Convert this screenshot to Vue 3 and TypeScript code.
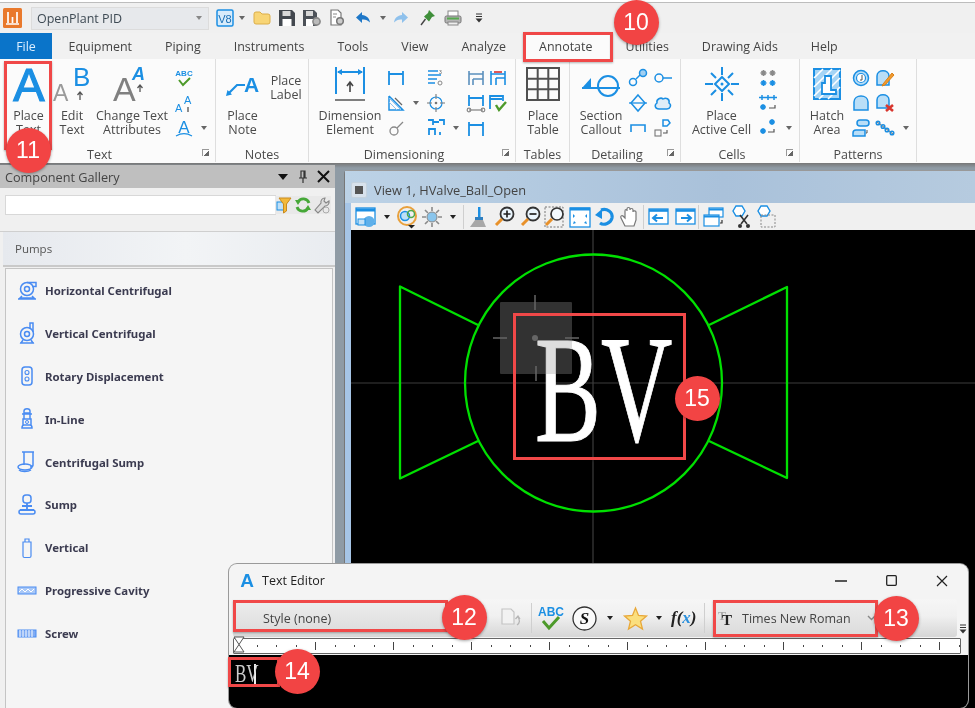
<script setup lang="ts">
import { h } from 'vue'
import type { FunctionalComponent } from 'vue'

const B = '#1b8fe3'
const P = '#4a8cf2'
const none = 'stroke="none"'

// pixel sized icon table: [width, height, svg markup]
const icons: Record<string, [number, number, string]> = {
  logo: [19, 20, `<rect width="19" height="20" rx="1.5" fill="#e9792c" ${none}/><path d="M5 4v11M9.5 9v6M14 4v11M3 16h13" stroke="#fff" stroke-width="1.7"/>`],
  v8: [18, 18, `<rect x="1" y="1" width="16" height="16" rx="1.5" fill="#d8ecfb" stroke="${B}"/><text x="9" y="14" text-anchor="middle" font-size="11" font-family="Liberation Sans" fill="#1a6fb5" ${none}>V8</text>`],
  folder: [18, 14, `<path d="M1 3q0-2 2-2h4l2 2h6q2 0 2 2v6q0 2-2 2H3q-2 0-2-2z" fill="#f8d576" stroke="#dcae48" stroke-width="1"/>`],
  save: [16, 16, `<path d="M0 0h13l3 3v13H0z" fill="#43484f" ${none}/><rect x="3.5" y="1" width="8" height="5" fill="#d8d8d8" ${none}/><rect x="3.5" y="9" width="9" height="7" fill="#fff" ${none}/>`],
  saveall: [18, 16, `<path d="M0 0h11l3 3v13H0z" fill="#4c5158" ${none}/><rect x="3" y="1" width="7" height="5" fill="#d8d8d8" ${none}/><rect x="3" y="9" width="7" height="7" fill="#fff" ${none}/><circle cx="13.5" cy="11.5" r="3.6" fill="#bbb" stroke="#888" stroke-width="1.6"/>`],
  docgear: [16, 18, `<path d="M2 1h7l3 3v12H2z" fill="#fff" stroke="#777" stroke-width="1.2"/><circle cx="11" cy="12" r="3.3" fill="#ccc" stroke="#777" stroke-width="1.5"/><path d="M4 5h4M4 8h3" stroke="#888" stroke-width="1"/>`],
  undo: [16, 14, `<path d="M7 1 1 6.500 7 12V8.500c3-.4 5.500.3 8 3-.5-4.500-3.500-7-8-7.500z" fill="#1f78c8" ${none}/>`],
  redo: [15, 14, `<path d="M8 1l6 5.500L8 12V8.500c-3-.4-5.500.3-8 3 .5-4.500 3.500-7 8-7.500z" fill="#8fc1ec" ${none}/>`],
  pin: [16, 18, `<path d="M9 1l6 6-3 1-3 4.500-5-5L8 4z" fill="#3f8f3a" ${none}/><path d="M5.500 10 1 16" stroke="#444" stroke-width="1.4"/>`],
  print: [18, 16, `<rect x="4" y="1" width="10" height="6" fill="#fff" stroke="#888" stroke-width="1"/><rect x="1" y="6" width="16" height="7" rx="1.500" fill="#b5b5b5" stroke="#777" stroke-width="1"/><rect x="3" y="7.500" width="12" height="2" fill="#56a84f" ${none}/><rect x="4" y="12" width="10" height="3" fill="#eee" stroke="#888" stroke-width="1"/>`],
  more: [8, 10, `<path d="M1 1h6M1 3.500h6" stroke="#333" stroke-width="1.2"/><path d="M0.500 5.500h7L4 9.500z" fill="#333" ${none}/>`],

  bigA: [36, 40, `<text x="18" y="37" text-anchor="middle" font-size="47" font-family="Liberation Sans" fill="${B}" stroke-width="1.200">A</text>`],
  edit: [38, 36, `<text x="0" y="35" font-size="23" font-family="Liberation Sans" fill="#9a9a9a" ${none}>A</text><text x="20" y="20" font-size="26" font-family="Liberation Sans" fill="${B}" ${none}>B</text><path d="M27 34v-7M24.500 29l2.500-3 2.500 3" stroke="#555" stroke-width="1.300"/>`],
  attrs: [38, 36, `<text x="0" y="35" font-size="34" font-family="Liberation Sans" fill="#808080" ${none}>A</text><text x="19" y="14" font-size="18" font-style="italic" font-family="Liberation Sans" font-weight="700" fill="${B}" ${none}>A</text><path d="M27 26v-6M24.500 22l2.500-3 2.500 3" stroke="#555" stroke-width="1.300"/>`],
  abc: [18, 18, `<text x="9" y="7" text-anchor="middle" font-size="8" font-weight="700" font-family="Liberation Sans" fill="${B}" ${none}>ABC</text><path d="M4 11l4 5 7-7" stroke="#4d9a2a" stroke-width="2"/>`],
  aa: [18, 20, `<text x="0" y="19" font-size="11" font-family="Liberation Sans" fill="${B}" ${none}>A</text><text x="9" y="11" font-size="11" font-family="Liberation Sans" fill="${B}" ${none}>A</text><path d="M13 19v-5" stroke="#444" stroke-width="1.200"/>`],
  arcA: [18, 18, `<text x="9" y="14" text-anchor="middle" font-size="17" font-family="Liberation Sans" fill="${B}" ${none}>A</text><path d="M1 17c5-3 11-3 16 0" stroke-width="1.200"/>`],
  note: [36, 26, `<text x="19" y="21" font-size="21" font-weight="700" font-family="Liberation Sans" fill="${B}" ${none}>A</text><path d="M3 23l9-9h8" stroke-width="2.200"/><path d="M1 25l6-1.500-4.500-4.500z" fill="${B}" ${none}/>`],
  dim: [32, 36, `<path d="M2 1v27M30 1v27M4 6h24" stroke-width="2"/><path d="M3 6l5-3v6zM29 6l-5-3v6z" fill="${B}" ${none}/><path d="M1 34h30" stroke="#555" stroke-width="1.500"/><path d="M16 26v-9M13 20l3-4 3 4" stroke="#444" stroke-width="1.600"/>`],
  d1: [18, 16, `<path d="M2 1v14M16 1v14M2 4h14" stroke-width="1.800"/>`],
  d2: [18, 18, `<path d="M2 2v14h14L2 2" stroke-width="1.500"/><path d="M2 8l8 8M2 4l12 12" stroke="#8fc3ee" stroke-width="1"/><path d="M8 4 15 11" stroke="#666" stroke-width="1.200"/>`],
  d3: [16, 16, `<circle cx="6" cy="11" r="4" stroke="#888" stroke-width="1.300"/><path d="M9 8l6-6" stroke="#888" stroke-width="1.300"/>`],
  d4: [18, 18, `<path d="M1 2h10M1 6h13M1 10h9M1 14h7" stroke-width="1.500"/><text x="12" y="5" font-size="5" fill="#555" font-family="Liberation Sans" ${none}>3</text><circle cx="13" cy="14" r="2" stroke="#888" stroke-width="1"/>`],
  d5: [18, 18, `<circle cx="9" cy="9" r="6" stroke="${B}" stroke-width="1.200"/><circle cx="9" cy="9" r="1.300" fill="#777" ${none}/><path d="M9 0v5M9 13v5M0 9h5M13 9h5" stroke="#777" stroke-width="1.100"/>`],
  d6: [20, 18, `<path d="M2 1h5v5M13 1h5v5M7 3h6M3 16v-6h6v6M14 16v-3" stroke-width="1.800"/>`],
  d7: [18, 18, `<path d="M2 2v14M16 2v14M2 5h14M6 10h10M6 10v6" stroke="#5b90bd" stroke-width="1.600"/>`],
  d8: [18, 16, `<path d="M2 2v14M16 2v14M2 5h14" stroke-width="1.800"/>`],
  d9: [18, 18, `<path d="M2 2v14M16 2v14M2 5h14M7 9h9M7 9v7" stroke-width="1.600"/><path d="M5 3h8" stroke="#d44" stroke-width="1.800"/>`],
  d10: [20, 18, `<path d="M3 1v11M17 1v11M3 4h14" stroke-width="1.800"/><path d="M3 16h14" stroke="#888" stroke-width="1.300"/><circle cx="3" cy="16" r="1.800" stroke="#888" stroke-width="1.200"/><circle cx="17" cy="16" r="1.800" stroke="#888" stroke-width="1.200"/>`],
  d11: [20, 18, `<path d="M2 15V2h13v5M2 5h12" stroke-width="1.800"/><path d="M8 11l3 5 7-8" stroke="#4d9a2a" stroke-width="2.400"/>`],
  table: [36, 36, `<path d="M2 2h32v32H2zM2 12.700h32M2 23.300h32M12.700 2v32M23.300 2v32" stroke="#505050" stroke-width="2"/>`],
  section: [38, 26, `<path d="M0 17 9 7v10z" fill="${B}" ${none}/><path d="M0 17h38" stroke-width="2"/><ellipse cx="26" cy="15" rx="10" ry="10" stroke-width="2"/>`],
  s1: [20, 18, `<circle cx="5" cy="13" r="3.500"/><circle cx="15" cy="4" r="3.500" fill="${B}" fill-opacity=".4"/><path d="M8 10l4-4"/>`],
  s2: [18, 18, `<path d="M9 1l7 8-7 8-7-8z"/><path d="M0 9h18" stroke-width="1.300"/>`],
  s3: [16, 10, `<path d="M1 9V2h14v7M1 2h14" stroke-width="1.600"/>`],
  s4: [18, 12, `<circle cx="5" cy="6" r="4"/><path d="M9 6h9" />`],
  s5: [20, 18, `<path d="M6 15c-4 0-5-4-2-6-1-4 4-6 6-4 3-2 7 0 6 4 3 2 1 6-2 6z" fill="${B}" fill-opacity=".12"/>`],
  s6: [18, 18, `<path d="M9 1h5l2 3-3 3h-4z"/><rect x="1" y="11" width="6" height="6" stroke="#777" stroke-width="1.100"/><path d="M9 14h4v-3" stroke="#555" stroke-width="1.100"/>`],
  active: [34, 34, `<path d="M17 10l7 7-7 7-7-7z" stroke-width="2"/><circle cx="17" cy="17" r="1.500" fill="${B}" ${none}/><path d="M17 0v8M17 26v8M0 17h8M26 17h8M6 6l5 5M23 23l5 5M28 6l-5 5M11 23l-5 5" stroke-width="2"/>`],
  ce1: [18, 18, `<g stroke="#8a8a8a" stroke-width="1.500"><path d="M4.500 1v6M1.500 4h6M2.500 2l4 4M6.500 2l-4 4M13.500 1v6M10.500 4h6M11.500 2l4 4M15.500 2l-4 4"/></g><path d="M4.500 11v6M1.500 14h6M2.500 12l4 4M6.500 12l-4 4M13.500 11v6M10.500 14h6M11.500 12l4 4M15.500 12l-4 4" stroke-width="1.500"/>`],
  ce2: [18, 18, `<path d="M3 1v5M0 3.500h6M9 1v5M6 3.500h6M15 1v5M12 3.500h6M4 10v6M1 13h6M2 11l4 4M6 11l-4 4" stroke-width="1.500"/><path d="M10 14h6v-3" stroke="#555" stroke-width="1.200"/>`],
  ce3: [18, 18, `<path d="M13 0v6M10 3h6M11 1l4 4M15 1l-4 4M4 9v6M1 12h6M2 10l4 4M6 10l-4 4" stroke-width="1.600"/><path d="M9 13h6v-3" stroke="#555" stroke-width="1.200"/>`],
  hatch: [28, 32, `<rect x="1" y="1" width="26" height="30" fill="#a5d4f5" stroke-width="2"/><path d="M1 10 10 1M1 19 19 1M1 28 27 2M6 31 27 10M15 31 27 19" stroke="#fff" stroke-width="1.600"/><path d="M12 8h6v14h5v4H9V15h3z" fill="#fff" stroke-width="1.800"/>`],
  p1: [18, 18, `<circle cx="9" cy="9" r="7.500" fill="#b9def7"/><circle cx="9" cy="9" r="4.500" fill="#fff" stroke-width="1.200"/><path d="M10 6v5H8" stroke="#555" stroke-width="1"/>`],
  p2: [20, 18, `<path d="M2 16V7c0-7 12-7 12 0v9z" fill="#b9def7"/><path d="M8 15 17 4l2 2-9 10-3 1z" fill="#f29a2e" stroke="#d98218" stroke-width="1"/>`],
  p3: [18, 18, `<path d="M2 16V8c0-8 14-8 14 0v8z" fill="#b9def7"/>`],
  p4: [20, 18, `<path d="M2 14V6c0-7 12-7 12 0v8z" fill="#b9def7"/><path d="M11 11l7 6M18 11l-7 6" stroke="#d8362e" stroke-width="2.600"/>`],
  p5: [18, 18, `<rect x="5" y="1" width="12" height="6" rx="3" fill="#b9def7"/><path d="M1 17v-3c0-2 1-3 3-3h9v6z" fill="#b9def7"/><path d="M15 11v3h-1" stroke="#555" stroke-width="1"/>`],
  p6: [20, 16, `<path d="M2 2l16 12" stroke="#888" stroke-width="1.100"/><circle cx="3" cy="3" r="1.800"/><circle cx="8" cy="6.500" r="1.800"/><circle cx="12" cy="10" r="1.800"/><circle cx="17" cy="13" r="1.800"/>`],

  funnel: [15, 17, `<rect x="0" y="5" width="9" height="8" fill="#bfe0f8" stroke="${B}" stroke-width="1"/><path d="M2 1h12L9.500 7v7l-3 2V7z" fill="#f3b93a" stroke="#c98a1c" stroke-width="1"/>`],
  refresh: [16, 16, `<path d="M14 6A6 6 0 0 0 3 5M2 10a6 6 0 0 0 11 1" stroke="#46a838" stroke-width="2.800"/><path d="M0 3h6L3 8zM16 13h-6l3-5z" fill="#46a838" ${none}/>`],
  wrench: [16, 17, `<path d="M11 1a4 4 0 0 0-4 5L1 13l3 3 7-7a4 4 0 0 0 4-5l-3 2-2-2z" fill="#ddd" stroke="#888" stroke-width="1.100"/><circle cx="12" cy="13" r="3" stroke="#aaa" stroke-width="1"/>`],

  g1: [20, 20, `<circle cx="10" cy="9" r="6.500"/><circle cx="10" cy="9" r="2.500"/><path d="M10 2.500h9v4h-4M5 16l-2 2h14l-2-2M1 19h18" />`],
  g2: [16, 22, `<circle cx="8" cy="12" r="6.500"/><circle cx="8" cy="12" r="2.500"/><path d="M11 7V1h3v9M4 18l-2 3h12l-2-3M1 21h14"/>`],
  g3: [12, 20, `<rect x="1" y="1" width="10" height="18" rx="3"/><circle cx="6" cy="6.500" r="2" stroke-width="1.100"/><circle cx="6" cy="13" r="2" stroke-width="1.100"/>`],
  g4: [12, 22, `<path d="M3 3c0-3 6-3 6 0v2H3zM1 6h10M3 6v5h6V6M2 11h8v6H2zM1 20c0-2 1-3 2-3h6c1 0 2 1 2 3z"/><circle cx="6" cy="14" r="1.500" stroke-width="1"/>`],
  g5: [20, 22, `<path d="M5 1h12M7 1v13M16 1v13c0 1-1 2-3 2"/><ellipse cx="8" cy="16" rx="7" ry="3"/><path d="M2 19c2 2 9 2 12 0"/>`],
  g6: [18, 22, `<rect x="5" y="1" width="8" height="8" rx="3"/><path d="M9 9v6M4 12h10M2 16h14" stroke-width="1.800"/><rect x="1" y="16" width="16" height="4" rx="2"/>`],
  g7: [10, 20, `<path d="M3 1h4v3H3zM1 4h8v14a1.500 1.500 0 0 1-1.500 1.500h-5A1.500 1.500 0 0 1 1 18z" stroke-width="1.200"/>`],
  g8: [20, 10, `<rect x="1" y="1" width="18" height="7" fill="#a9c8f7" stroke-width="1"/><path d="M2 6l3-3 3 3 3-3 3 3 3-3" stroke="#fff" stroke-width="1"/>`],
  g9: [20, 10, `<rect x="1" y="1" width="18" height="7" fill="#7fabf3" stroke-width="1"/><path d="M3 1v7M6 1v7M9 1v7M12 1v7M15 1v7" stroke="#fff" stroke-width="1"/>`],

  vwin: [22, 22, `<rect x="1" y="2" width="19" height="16" fill="#fff" stroke-width="1.300"/><path d="M1 4h19" stroke-width="3"/><circle cx="14" cy="15.500" r="5.500" fill="#5fb0ea" ${none}/><rect x="3" y="13" width="7" height="6" fill="#c5e2f7" stroke-width="1"/>`],
  vdisp: [21, 24, `<circle cx="10" cy="11" r="9" stroke="#e8a03c" stroke-width="2"/><circle cx="8" cy="11" r="4.500" fill="#bde0f7" stroke="${B}" stroke-width="1.500"/><circle cx="14" cy="9" r="3.500" stroke="#4ea84a" stroke-width="1.500"/><path d="M11 20h7l-3.500 3.500z" fill="#222" ${none}/>`],
  vsun: [20, 20, `<circle cx="10" cy="10" r="5" fill="#8ac5ec" stroke="#888" stroke-width="1"/><path d="M10 0v4M10 16v4M0 10h4M16 10h4M3 3l3 3M14 14l3 3M17 3l-3 3M6 14l-3 3" stroke="#8a8a8a" stroke-width="1.600"/>`],
  brush: [16, 22, `<path d="M8 1h2.500v10H8z" fill="${B}" ${none}/><path d="M5 11h8v3H5z" fill="#2f7fc0" ${none}/><path d="M5 14h8l3 7H0z" fill="#a8a8a8" ${none}/>`],
  zin: [21, 21, `<circle cx="13" cy="8" r="6.500" stroke="#333" stroke-width="1.800" fill="#eaf5fd"/><path d="M9.500 8h7M13 4.500v7" stroke="#222" stroke-width="1.700"/><path d="M8 13l-6 6" stroke="#e8912a" stroke-width="3"/>`],
  zout: [21, 21, `<circle cx="13" cy="8" r="6.500" stroke="#333" stroke-width="1.800" fill="#eaf5fd"/><path d="M9.500 8h7" stroke="#222" stroke-width="1.700"/><path d="M8 13l-6 6" stroke="#e8912a" stroke-width="3"/>`],
  zwin: [21, 22, `<rect x="1" y="1" width="18" height="20" stroke="#777" stroke-width="1" stroke-dasharray="2 1.500"/><circle cx="13" cy="8" r="6" stroke="#333" stroke-width="1.700" fill="#f4fafe"/><path d="M8 13l-6 6" stroke="#e8912a" stroke-width="3"/>`],
  fit: [22, 22, `<rect x="1" y="2" width="20" height="19" fill="#fff" stroke-width="1.300"/><path d="M1 3h20" stroke-width="3"/><path d="M4 8l2 2-2 2zM18 8l-2 2 2 2zM4 18l3-1-2-2zM18 18l-3-1 2-2z" fill="${B}" ${none}/>`],
  rotate: [21, 20, `<path d="M7 3c6-2 12 2 11 8-1 5-8 8-12 5" stroke-width="3.200"/><path d="M1 8l7-6v10z" fill="${B}" ${none}/>`],
  hand: [20, 22, `<path d="M5 20 1 12c-1-2 1-3 2-2l2 2V5c0-2 2-2 2 0V3c0-2 3-2 3 0v1c0-2 3-2 3 0v2c0-2 3-1 3 0v8l-2 6z" fill="#fff" stroke="#777" stroke-width="1.200"/>`],
  vleft: [21, 17, `<rect x="1" y="1" width="19" height="15" fill="#fff" stroke-width="1.300"/><path d="M1 2.500h19" stroke-width="2.600"/><path d="M15 10H6M9 6.500 5 10l4 3.500" stroke-width="2"/>`],
  vright: [21, 17, `<rect x="1" y="1" width="19" height="15" fill="#fff" stroke-width="1.300"/><path d="M1 2.500h19" stroke-width="2.600"/><path d="M6 10h9M12 6.500l4 3.500-4 3.500" stroke-width="2"/>`],
  vcopy: [21, 20, `<rect x="6" y="1" width="14" height="9" fill="#fff" stroke-width="1.200"/><path d="M6 2.500h14" stroke-width="2"/><rect x="1" y="8" width="15" height="11" fill="#fff" stroke-width="1.200"/><path d="M1 9.500h15" stroke-width="2"/><path d="M17 16h2v-3" stroke="#333" stroke-width="1.200"/>`],
  scissors: [22, 24, `<path d="M6 1h6l3 5-3 5H6L3 6z" stroke-width="1.400" fill="#fff"/><path d="M10 10l7 9M18 10l-7 9" stroke="#333" stroke-width="1.600"/><circle cx="10" cy="21" r="2" fill="#333" ${none}/><circle cx="18" cy="21" r="2" fill="#333" ${none}/>`],
  dashclip: [21, 24, `<path d="M6 1h6l3 5-3 5H6L3 6z" stroke-width="1.400" fill="#fff"/><rect x="6" y="10" width="14" height="12" stroke="#888" stroke-width="1" stroke-dasharray="2 1.500"/>`],

  miniA: [14, 15, `<text x="7" y="14" text-anchor="middle" font-size="19" font-weight="700" font-family="Liberation Sans" fill="${B}" ${none}>A</text>`],
  docgo: [22, 20, `<path d="M2 1h9l3 3v12H2z" fill="#f2f2f2" stroke="#c4c4c4" stroke-width="1.200"/><path d="M17 17c3-2 3-5 1-8M15.500 11l2.500-3 2 3" stroke="#b5b5b5" stroke-width="1.300"/>`],
  abcBig: [28, 26, `<text x="14" y="11" text-anchor="middle" font-size="12" font-weight="700" font-family="Liberation Sans" fill="${B}" ${none}>ABC</text><path d="M6 16l6 7 10-11" stroke="#4d9a2a" stroke-width="3"/>`],
  circS: [25, 25, `<circle cx="12.500" cy="12.500" r="11.500" fill="#fafafa" stroke="#333" stroke-width="1.300"/><text x="12.500" y="18" text-anchor="middle" font-size="17" font-style="italic" font-weight="700" font-family="Liberation Serif" fill="#111" ${none}>S</text>`],
  star: [23, 22, `<path d="M11.500 1l3 7.500 8 .5-6 5.200 2 7.800-7-4.300-7 4.300 2-7.800-6-5.200 8-.5z" fill="#fbdf7e" stroke="#e8a83a" stroke-width="1.300"/>`],
  ttf: [17, 15, `<text x="0" y="9" font-size="12" font-weight="700" font-family="Liberation Serif" fill="#aaa" ${none}>T</text><text x="4" y="14" font-size="15" font-weight="700" font-family="Liberation Serif" fill="#222" ${none}>T</text>`],
}

const Ic: FunctionalComponent<{ n: string }> = (p) => {
  const [w, ht, markup] = icons[p.n]
  return h('svg', {
    width: w,
    height: ht,
    viewBox: `0 0 ${w} ${ht}`,
    fill: 'none',
    stroke: B,
    'stroke-width': 1.5,
    overflow: 'visible',
    innerHTML: markup,
  })
}
Ic.props = ['n']

const tabs = ['Equipment', 'Piping', 'Instruments', 'Tools', 'View', 'Analyze', 'Annotate', 'Utilities', 'Drawing Aids', 'Help']

const dimIcons = ['d1', '', 'd4', '', 'd7', 'd9', 'd2', 'caret', 'd5', '', 'd10', 'd11', 'd3', '', 'd6', 'caret', 'd8', '']
const detailIcons = ['s1', 's4', 's2', 's5', 's3', 's6']
const patternIcons = ['p1', 'p2', '', 'p3', 'p4', '', 'p5', 'p6', 'caret']

const pumps = [
  { name: 'Horizontal Centrifugal', icon: 'g1' },
  { name: 'Vertical Centrifugal', icon: 'g2' },
  { name: 'Rotary Displacement', icon: 'g3' },
  { name: 'In-Line', icon: 'g4' },
  { name: 'Centrifugal Sump', icon: 'g5' },
  { name: 'Sump', icon: 'g6' },
  { name: 'Vertical', icon: 'g7' },
  { name: 'Progressive Cavity', icon: 'g8' },
  { name: 'Screw', icon: 'g9' },
]

// slot widths keep the toolbar buttons on their spacing
const viewTools: [string, number][] = [
  ['vwin', 29], ['caret', 14], ['vdisp', 27], ['vsun', 22], ['caret', 20], ['sep', 1],
  ['brush', 27], ['zin', 27], ['zout', 24], ['zwin', 25], ['fit', 25], ['rotate', 25], ['hand', 26], ['sep', 1],
  ['vleft', 29], ['vright', 25], ['sep', 1], ['vcopy', 29], ['scissors', 26], ['dashclip', 22],
]

const rulerTicks = Array.from({ length: 37 }, (_, i) => (i + 1) % 4 === 0)

// red annotations laid over the screenshot
const marks = [
  { x: 523, y: 32, w: 90, h: 30 },
  { x: 4, y: 61, w: 48, h: 89 },
  { x: 233, y: 600, w: 215, h: 32 },
  { x: 713, y: 600, w: 165, h: 37 },
  { x: 228, y: 657, w: 52, h: 30 },
  { x: 513, y: 313, w: 173, h: 147 },
]
const callouts = [
  { n: 10, x: 636, y: 22 },
  { n: 11, x: 28, y: 150 },
  { n: 12, x: 464, y: 617 },
  { n: 13, x: 896, y: 618 },
  { n: 14, x: 297, y: 671 },
  { n: 15, x: 697, y: 398 },
]
</script>

<template>
  <div class="app">
    <div class="qat">
      <Ic n="logo" class="q-logo" />
      <div class="q-combo">
        <span>OpenPlant PID</span>
        <i class="caret soft"></i>
      </div>
      <Ic n="v8" class="q-v8" />
      <i class="caret q-c1"></i>
      <Ic n="folder" class="q-folder" />
      <Ic n="save" class="q-save" />
      <Ic n="saveall" class="q-saveall" />
      <Ic n="docgear" class="q-doc" />
      <Ic n="undo" class="q-undo" />
      <i class="caret q-c2"></i>
      <Ic n="redo" class="q-redo" />
      <Ic n="pin" class="q-pin" />
      <Ic n="print" class="q-print" />
      <Ic n="more" class="q-more" />
    </div>

    <div class="tabs">
      <div class="tab file">File</div>
      <div v-for="t in tabs" :key="t" class="tab" :class="{ on: t === 'Annotate' }">{{ t }}</div>
    </div>

    <div class="ribbon">
      <section class="group g-text">
        <div class="body">
          <div class="big w-place"><div class="big-ic"><Ic n="bigA" /></div><span>Place<br />Text</span></div>
          <div class="big w-edit"><div class="big-ic"><Ic n="edit" /></div><span>Edit<br />Text</span></div>
          <div class="big w-attr"><div class="big-ic"><Ic n="attrs" /></div><span>Change Text<br />Attributes</span></div>
          <div class="small-grid col-text">
            <div class="cell"><Ic n="abc" /></div><div class="cell"></div>
            <div class="cell"><Ic n="aa" /></div><div class="cell"></div>
            <div class="cell"><Ic n="arcA" /></div><div class="cell"><i class="caret"></i></div>
          </div>
        </div>
        <div class="label launch">Text<i class="launcher"></i></div>
      </section>

      <section class="group g-notes">
        <div class="body">
          <div class="big w-note"><div class="big-ic"><Ic n="note" /></div><span>Place<br />Note</span></div>
          <div class="side-text">Place<br />Label</div>
        </div>
        <div class="label">Notes</div>
      </section>

      <section class="group g-dim">
        <div class="body">
          <div class="big w-dim"><div class="big-ic"><Ic n="dim" /></div><span>Dimension<br />Element</span></div>
          <div class="small-grid col-dim">
            <div v-for="(d, i) in dimIcons" :key="i" class="cell">
              <i v-if="d === 'caret'" class="caret"></i>
              <Ic v-else-if="d" :n="d" />
            </div>
          </div>
        </div>
        <div class="label launch">Dimensioning<i class="launcher"></i></div>
      </section>

      <section class="group g-tables">
        <div class="body">
          <div class="big w-table"><div class="big-ic"><Ic n="table" /></div><span>Place<br />Table</span></div>
        </div>
        <div class="label">Tables</div>
      </section>

      <section class="group g-detail">
        <div class="body">
          <div class="big w-section"><div class="big-ic"><Ic n="section" /></div><span>Section<br />Callout</span></div>
          <div class="small-grid col-detail">
            <div v-for="d in detailIcons" :key="d" class="cell"><Ic :n="d" /></div>
          </div>
        </div>
        <div class="label launch">Detailing<i class="launcher"></i></div>
      </section>

      <section class="group g-cells">
        <div class="body">
          <div class="big w-cell"><div class="big-ic"><Ic n="active" /></div><span>Place<br />Active Cell</span></div>
          <div class="small-grid col-cell">
            <div class="cell"><Ic n="ce1" /></div><div class="cell"></div>
            <div class="cell"><Ic n="ce2" /></div><div class="cell"></div>
            <div class="cell"><Ic n="ce3" /></div><div class="cell"><i class="caret"></i></div>
          </div>
        </div>
        <div class="label launch">Cells<i class="launcher"></i></div>
      </section>

      <section class="group g-patterns">
        <div class="body">
          <div class="big w-hatch"><div class="big-ic"><Ic n="hatch" /></div><span>Hatch<br />Area</span></div>
          <div class="small-grid col-pattern">
            <div v-for="(d, i) in patternIcons" :key="i" class="cell">
              <i v-if="d === 'caret'" class="caret"></i>
              <Ic v-else-if="d" :n="d" />
            </div>
          </div>
        </div>
        <div class="label">Patterns</div>
      </section>
    </div>

    <div class="workspace">
      <aside class="gallery">
        <header class="gal-head">
          <span>Component Gallery</span>
          <i class="caret big-caret"></i>
          <svg class="gal-pin" width="10" height="14" viewBox="0 0 10 14" fill="none" stroke="#333" stroke-width="1.200"><path d="M3 1h4v7H3zM1 8h8M5 8v5M6 1v7" /></svg>
          <svg class="gal-x" width="13" height="13" viewBox="0 0 13 13" stroke="#111" stroke-width="2"><path d="M1 1l11 11M12 1 1 12" /></svg>
        </header>
        <div class="search-row">
          <div class="search-input"></div>
          <div class="search-tools">
            <Ic n="funnel" /><Ic n="refresh" /><Ic n="wrench" />
          </div>
        </div>
        <div class="cat">Pumps</div>
        <ul class="pumps">
          <li v-for="p in pumps" :key="p.name">
            <span class="pump-ic"><Ic :n="p.icon" :style="{ stroke: P }" /></span>
            <span>{{ p.name }}</span>
          </li>
        </ul>
      </aside>

      <section class="view">
        <div class="view-title">
          <span class="view-badge"><b></b></span>
          <span>View 1, HValve_Ball_Open</span>
        </div>
        <div class="view-tools">
          <template v-for="([n, w], i) in viewTools" :key="i">
            <span v-if="n === 'sep'" class="vsep"></span>
            <span v-else class="vslot" :style="{ width: w + 'px' }">
              <i v-if="n === 'caret'" class="caret dark"></i>
              <Ic v-else :n="n" />
            </span>
          </template>
        </div>
        <div class="canvas">
          <svg class="drawing" viewBox="351 230 624 478" fill="none">
            <path d="M593 230v478M351 383h624" stroke="#3c3c3c" stroke-width="1.200" />
            <g stroke="#00e000" stroke-width="2.300" stroke-linejoin="round">
              <circle cx="593.500" cy="383" r="128.500" />
              <path d="M478 325 400 286.500V478.500L478 441M709 325 787 287V478L709 441" />
            </g>
            <text class="bv" transform="translate(535 441) scale(.65 1)">BV</text>
            <rect x="500" y="302" width="72" height="72" rx="1" fill="#999" fill-opacity=".33" />
            <path d="M535 295v15M536 366v15M493 338h14M565 338h14" stroke="#666" stroke-width="1.500" />
            <circle cx="535" cy="338" r="3" fill="#666" />
          </svg>
        </div>
      </section>
    </div>

    <div class="editor">
      <header class="ed-title">
        <Ic n="miniA" />
        <span class="ed-name">Text Editor</span>
        <svg class="ed-ctl" width="12" height="2" viewBox="0 0 12 2" stroke="#222" stroke-width="1.400"><path d="M0 1h12" /></svg>
        <svg class="ed-ctl" width="11" height="11" viewBox="0 0 11 11" fill="none" stroke="#222" stroke-width="1.300"><rect x=".7" y=".7" width="9.600" height="9.600" rx="1" /></svg>
        <svg class="ed-ctl" width="12" height="12" viewBox="0 0 12 12" stroke="#222" stroke-width="1.200"><path d="M1 1l10 10M11 1 1 11" /></svg>
      </header>
      <div class="ed-tools">
        <div class="bar">
          <div class="ed-style">Style (none)</div>
          <span class="ed-doc"><Ic n="docgo" /></span>
          <span class="vsep tall"></span>
          <Ic n="abcBig" class="ed-abc" />
          <Ic n="circS" class="ed-s" />
          <i class="caret dark ed-c1"></i>
          <Ic n="star" class="ed-star" />
          <i class="caret dark ed-c2"></i>
          <span class="fx"><em>f</em><em>(</em><em class="x">x</em><em>)</em></span>
          <span class="vsep tall ed-sep2"></span>
          <div class="ed-font">
            <Ic n="ttf" />
            <span>Times New Roman</span>
            <svg width="9" height="6" viewBox="0 0 9 6" fill="none" stroke="#888" stroke-width="1.400"><path d="M1 1l3.500 3.500L8 1" /></svg>
          </div>
        </div>
        <Ic n="more" class="ed-more" />
      </div>
      <div class="ruler">
        <svg class="ruler-mark" width="12" height="17" viewBox="0 0 12 17" fill="#fff" stroke="#555" stroke-width="1"><path d="M1 1h10L6 8.500zM1 16h10L6 8.500z" /></svg>
        <span v-for="(tall, i) in rulerTicks" :key="i" class="tick" :class="{ tall }"></span>
      </div>
      <div class="ed-text">
        <span class="ed-bv">BV</span><i class="cursor"></i>
      </div>
    </div>

    <div v-for="(m, i) in marks" :key="i" class="mark" :style="{ left: m.x + 'px', top: m.y + 'px', width: m.w + 'px', height: m.h + 'px' }"></div>
    <div v-for="c in callouts" :key="c.n" class="callout" :style="{ left: c.x + 'px', top: c.y + 'px' }">{{ c.n }}</div>
  </div>
</template>

<style>
html,
body {
  margin: 0;
  background: #fff;
}
</style>

<style scoped>
.app {
  position: relative;
  width: 975px;
  height: 708px;
  overflow: hidden;
  display: flex;
  flex-direction: column;
  font-family: 'Open Sans', 'Liberation Sans', sans-serif;
  font-size: 12.500px;
  color: #444;
  background: #fff;
  filter: blur(.35px);
}

svg {
  display: block;
  flex: none;
}

.caret {
  display: block;
  flex: none;
  width: 0;
  height: 0;
  border-left: 3.500px solid transparent;
  border-right: 3.500px solid transparent;
  border-top: 4px solid #666;
}
.caret.dark {
  border-top-color: #222;
}
.caret.soft {
  border-top-color: #888;
}

/* quick access row */
.qat {
  margin-top: 2px;
  height: 31px;
  flex: none;
  display: flex;
  align-items: center;
  padding-left: 3px;
  box-sizing: border-box;
  background: #f0f0f0;
  border-top: 1px solid #bdbdbd;
}
.q-combo {
  margin-left: 9px;
  width: 178px;
  height: 23px;
  box-sizing: border-box;
  display: flex;
  align-items: center;
  justify-content: space-between;
  padding: 0 6px 0 5px;
  background: #e7e9ec;
  border: 1px solid #dcdcdc;
  color: #3e4a54;
}
.q-v8 { margin-left: 7px; }
.q-c1 { margin-left: 5px; }
.q-folder { margin-left: 8px; }
.q-save { margin-left: 8px; }
.q-saveall { margin-left: 8px; }
.q-doc { margin-left: 8px; }
.q-undo { margin-left: 10px; }
.q-c2 { margin-left: 9px; }
.q-redo { margin-left: 8px; }
.q-pin { margin-left: 11px; }
.q-print { margin-left: 8px; }
.q-more { margin-left: 13px; }

/* tabs */
.tabs {
  height: 26px;
  flex: none;
  display: flex;
  align-items: stretch;
  background: #f1f1f1;
}
.tab {
  display: flex;
  align-items: center;
  padding: 0 16.500px;
  font-size: 12.450px;
  color: #444;
}
.tab.file {
  width: 52px;
  box-sizing: border-box;
  padding: 0;
  justify-content: center;
  background: #0a74c9;
  color: #dbeeff;
}
.tab.on {
  background: #fbfbfb;
}

/* ribbon */
.ribbon {
  height: 104px;
  flex: none;
  display: flex;
  background: #fbfbfb;
}
.group {
  box-sizing: border-box;
  display: flex;
  flex-direction: column;
  border-right: 1px solid #dedede;
  margin-bottom: 1px;
}
.g-text { width: 216px; }
.g-notes { width: 93px; }
.g-dim { width: 207px; }
.g-tables { width: 54px; }
.g-detail { width: 111px; }
.g-cells { width: 119px; }
.g-patterns { width: 117px; }
.body {
  height: 87px;
  flex: none;
  display: flex;
  align-items: flex-start;
}
.big {
  flex: none;
  display: flex;
  flex-direction: column;
  align-items: center;
  text-align: center;
  line-height: 14px;
  color: #4a4a4a;
  white-space: nowrap;
}
.big-ic {
  height: 50px;
  display: flex;
  align-items: center;
  justify-content: center;
}
.w-place { width: 57px; }
.w-edit { width: 30px; }
.w-attr { width: 80px; margin-left: 5px; }
.w-note { width: 53px; }
.w-dim { width: 60px; margin-left: 11px; }
.w-table { width: 54px; }
.w-section { width: 62px; }
.w-cell { width: 81px; }
.w-hatch { width: 54px; }
.side-text {
  padding-top: 15px;
  width: 34px;
  line-height: 14px;
  text-align: center;
  color: #4a4a4a;
}
.small-grid {
  display: grid;
  grid-auto-rows: 25px;
  padding-top: 6px;
}
.cell {
  display: flex;
  align-items: center;
  justify-content: center;
}
.col-text { grid-template-columns: 24px 16px; }
.col-dim { grid-template-columns: 20px 20px 20px 20px 20px 24px; margin-left: 6px; }
.col-detail { grid-template-columns: 24px 25px; margin-left: -6px; }
.col-cell { grid-template-columns: 24px 18px; margin-left: -6px; }
.col-pattern { grid-template-columns: 24px 24px 18px; margin-left: -5px; }
.label {
  position: relative;
  flex: 1;
  display: flex;
  align-items: center;
  justify-content: center;
  color: #4a4a4a;
}
.label.launch {
  padding-right: 16px;
}
.launcher {
  position: absolute;
  right: 6px;
  top: 3px;
  width: 7px;
  height: 7px;
  box-sizing: border-box;
  border-top: 1px solid #999;
  border-left: 1px solid #999;
  background: linear-gradient(135deg, transparent 52%, #666 52%);
}

/* lower area */
.workspace {
  flex: 1;
  min-height: 0;
  display: flex;
  align-items: stretch;
  padding-top: 2px;
  background: linear-gradient(#777, #8f9ba5 5px);
}
.gallery {
  width: 335px;
  flex: none;
  display: flex;
  flex-direction: column;
  background: #f0f0f0;
}
.gal-head {
  height: 23px;
  flex: none;
  display: flex;
  align-items: center;
  padding-left: 5px;
  background: #bfbfbf;
  font-size: 12.700px;
  color: #444;
}
.gal-head span {
  flex: 1;
}
.big-caret {
  border-left-width: 5px;
  border-right-width: 5px;
  border-top: 6px solid #111;
}
.gal-pin { margin-left: 10px; }
.gal-x { margin: 0 5px 0 9px; }
.search-row {
  height: 44px;
  flex: none;
  box-sizing: border-box;
  padding: 8px 4px 0 6px;
  display: flex;
  align-items: flex-start;
  border-bottom: 1px solid #cfcfcf;
}
.search-input {
  width: 269px;
  height: 18px;
  background: #fff;
  box-shadow: 0 0 0 1px #d8d8d8;
}
.search-tools {
  flex: 1;
  height: 18px;
  display: flex;
  align-items: center;
  justify-content: space-around;
  background: #e9e9e9;
}
.cat {
  height: 33px;
  flex: none;
  display: flex;
  align-items: center;
  padding-left: 12px;
  font-size: 11.500px;
  color: #555;
  background: linear-gradient(90deg, #e6e9ee, #f2f4f6 55%, #e9ecf0);
  border-bottom: 2px solid #c9c9c9;
  margin-left: 3px;
}
.pumps {
  flex: 1;
  list-style: none;
  margin: 1px 2px 0 5px;
  padding: 0;
  background: #f5f5f5;
  border: 1px solid #c4c4c4;
  border-bottom: 0;
}
.pumps li {
  height: 42.900px;
  display: flex;
  align-items: center;
  padding-left: 11px;
  gap: 8px;
  font-family: 'Noto Sans', 'Liberation Sans', sans-serif;
  font-size: 11.400px;
  font-weight: 700;
  color: #3b3b50;
}
.pump-ic {
  width: 20px;
  display: flex;
  justify-content: center;
}

.view {
  flex: 1;
  min-width: 0;
  display: flex;
  flex-direction: column;
  margin: 5px 0 0 9px;
  border-left: 1px solid #777;
  border-top: 1px solid #999;
  border-top-left-radius: 4px;
  background: #a6c5e6;
}
.view-title {
  height: 32px;
  flex: none;
  display: flex;
  align-items: center;
  gap: 7px;
  padding: 6px 0 0 6px;
  box-sizing: border-box;
  font-size: 12.800px;
  color: #444;
  background: linear-gradient(90deg, #bcd2e6, #a9c1da 60%, #b6cbdf);
}
.view-badge {
  width: 14px;
  height: 14px;
  display: flex;
  align-items: center;
  justify-content: center;
  background: #d8e2ec;
  border: 1px solid #c5d2dd;
  border-radius: 2px;
}
.view-badge b {
  width: 8px;
  height: 8px;
  background: #555;
}
.view-tools {
  height: 27px;
  flex: none;
  display: flex;
  align-items: center;
  margin-left: 6px;
  background: #f0f0f0;
}
.vslot {
  height: 27px;
  flex: none;
  display: flex;
  align-items: center;
  justify-content: center;
}
.vsep {
  flex: none;
  width: 1px;
  height: 24px;
  background: #cfcfcf;
}
.canvas {
  flex: 1;
  min-height: 0;
  margin-left: 6px;
  background: #000;
}
.drawing {
  width: 100%;
  height: 100%;
}
.bv {
  font-family: 'Liberation Serif', serif;
  font-size: 152px;
  fill: #fff;
  stroke: #fff;
  stroke-width: 1px;
}

/* floating text editor */
.editor {
  position: absolute;
  left: 229px;
  top: 564px;
  width: 739px;
  height: 144px;
  display: flex;
  flex-direction: column;
  background: #f4f4f4;
  border-radius: 8px;
  box-shadow: 0 0 0 1px #9a9a9a;
  overflow: hidden;
}
.ed-title {
  height: 33px;
  flex: none;
  display: flex;
  align-items: center;
  padding-left: 11px;
  color: #222;
}
.ed-name {
  margin-left: 8px;
  flex: 1;
}
.ed-ctl {
  margin-right: 39px;
}
.ed-ctl:last-child {
  margin-right: 20px;
}
.ed-tools {
  height: 40px;
  flex: none;
  display: flex;
  align-items: flex-end;
  padding: 0 3px 0 4px;
  box-sizing: border-box;
  gap: 2px;
}
.bar {
  width: 724px;
  height: 38px;
  flex: none;
  display: flex;
  align-items: center;
  background: linear-gradient(#f6f6f6, #f0f0f0 45%, #d6d6d6);
  border-radius: 3px;
}
.ed-style {
  width: 214px;
  height: 30px;
  margin-left: 1px;
  box-sizing: border-box;
  padding-left: 29px;
  display: flex;
  align-items: center;
  background: linear-gradient(#ececec, #dcdcdc);
  color: #444;
}
.ed-doc {
  margin-left: 52px;
}
.vsep.tall {
  margin-left: 9px;
  height: 30px;
}
.ed-abc { margin-left: 5px; }
.ed-s { margin-left: 7px; }
.ed-c1 { margin-left: 10px; }
.ed-star { margin-left: 11px; }
.ed-c2 { margin-left: 9px; }
.fx {
  margin-left: 9px;
  width: 27px;
  font-family: 'Liberation Serif', serif;
  font-size: 17px;
  font-weight: 700;
  color: #222;
  white-space: nowrap;
}
.fx em { font-style: italic; }
.fx .x { color: #2a8fdc; }
.vsep.ed-sep2 { margin-left: 6px; }
.ed-font {
  margin-left: 8px;
  width: 164px;
  height: 34px;
  box-sizing: border-box;
  display: flex;
  align-items: center;
  gap: 7px;
  padding-left: 5px;
  background: linear-gradient(#ececec, #dcdcdc);
  color: #444;
}
.ed-font span { width: 118px; white-space: nowrap; }
.ed-more { margin-bottom: 3px; }
.ruler {
  position: relative;
  height: 16px;
  flex: none;
  margin: 1px 7px 0 4px;
  box-sizing: border-box;
  display: flex;
  align-items: center;
  padding-left: 4px;
  background: #fff;
  border: 1px solid #666;
  border-radius: 1px;
}
.ruler-mark {
  position: absolute;
  left: -1px;
  top: -3px;
}
.tick {
  flex: none;
  position: relative;
  width: 19.500px;
  height: 10px;
}
.tick::after {
  content: '';
  position: absolute;
  right: 0;
  top: 4px;
  width: 1px;
  height: 2px;
  background: #444;
}
.tick.tall::after {
  top: 1px;
  height: 8px;
}
.ed-text {
  flex: 1;
  display: flex;
  align-items: flex-start;
  margin-top: 1px;
  padding: 9px 0 0 6px;
  background: #000;
}
.ed-bv {
  display: block;
  width: 18px;
  transform: scaleX(.68);
  transform-origin: left center;
  font-family: 'Liberation Serif', serif;
  font-size: 25px;
  line-height: 20px;
  color: #ccc;
}
.cursor {
  display: block;
  width: 1.500px;
  height: 20px;
  margin-left: 1px;
  background: #eee;
}

/* red callouts */
.mark {
  position: absolute;
  box-sizing: border-box;
  border: 3px solid #f04848;
  box-shadow: 0 1px 2px rgba(0, 0, 0, .3);
}
.callout {
  position: absolute;
  z-index: 1;
  width: 45px;
  height: 45px;
  margin: -22.500px 0 0 -22.500px;
  display: flex;
  align-items: center;
  justify-content: center;
  border-radius: 50%;
  background: #f24444;
  box-shadow: 0 1px 3px rgba(0, 0, 0, .35);
  font-family: 'Liberation Sans', sans-serif;
  font-size: 23px;
  color: #fff;
}
</style>
